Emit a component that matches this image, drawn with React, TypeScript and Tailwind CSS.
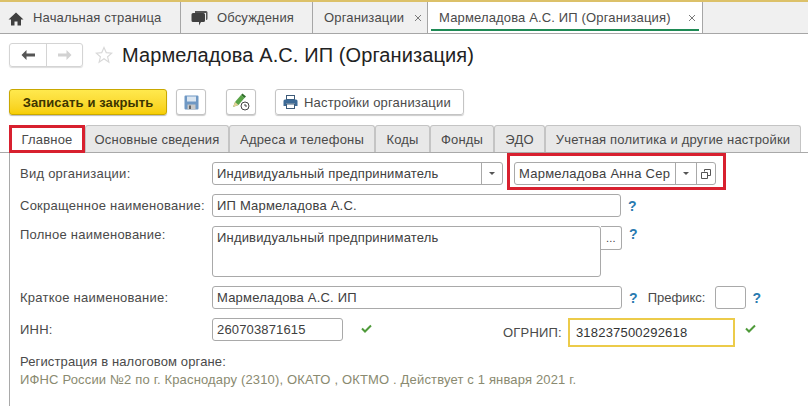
const font = "font-['Liberation_Sans',Arial,sans-serif]";

function CloseMark() {
  return (
    <svg width="8" height="8" viewBox="0 0 8 8" className="shrink-0">
      <path d="M1 1l6 6M7 1L1 7" stroke="#7a7a7a" strokeWidth="1" />
    </svg>
  );
}

function Help({ className = '' }: { className?: string }) {
  return <span className={`font-bold text-[14px] leading-none text-[#2a7ab0] ${className}`}>?</span>;
}

function Check({ className = '' }: { className?: string }) {
  return (
    <svg width="11" height="9" viewBox="0 0 11 9" className={className}>
      <path d="M1 4.500l3 3 6-6" fill="none" stroke="#4f9a3a" strokeWidth="2" />
    </svg>
  );
}

function Caret() {
  return (
    <svg width="6" height="3" viewBox="0 0 6 3">
      <path d="M0 0h6L3 3z" fill="#555" />
    </svg>
  );
}

function Field({ value, className = '' }: { value?: string; className?: string }) {
  return (
    <div className={`h-[23px] border border-[#a9a9a9] rounded-[3px] bg-white pl-[4px] flex items-center text-[#404040] ${className}`}>
      {value}
    </div>
  );
}

function TopTabs() {
  return (
    <div className="h-[34px] bg-[#f0f0f0] border-t-2 border-t-[#dcc169] border-b border-b-[#a6a6a6] flex text-[#4a4a4a] tracking-[0.15px]">
      <div className="w-[181px] border-r border-[#a6a6a6] flex items-center pl-[8px]">
        <svg width="16" height="14" viewBox="0 0 16 14" className="mr-[9px] mt-[2px]">
          <path d="M8 0.500L0.500 7.500H3V13.500H6.500V9.500H9.500V13.500H13V7.500H15.500z" fill="#404040" />
        </svg>
        Начальная страница
      </div>
      <div className="w-[132px] border-r border-[#a6a6a6] flex items-center pl-[10px]">
        <svg width="17" height="16" viewBox="0 0 17 16" className="mr-[9px]">
          <path d="M4 1h11a1.500 1.500 0 0 1 1.500 1.500v6a1.500 1.500 0 0 1-1.500 1.500H15V3H4z" fill="#555" />
          <path d="M2 3h10.500A1.500 1.500 0 0 1 14 4.500v6a1.500 1.500 0 0 1-1.500 1.500H10l-2 3.500V12H2a1.500 1.500 0 0 1-1.500-1.500v-6A1.500 1.500 0 0 1 2 3z" fill="#404040" />
        </svg>
        Обсуждения
      </div>
      <div className="w-[115px] border-r border-[#a6a6a6] flex items-center pl-[11px]">
        Организации
        <span className="ml-[10px] flex"><CloseMark /></span>
      </div>
      <div className="w-[275px] border-r border-[#a6a6a6] bg-white flex items-center pl-[11px] relative">
        Мармеладова А.С. ИП (Организация)
        <span className="ml-[17px] flex"><CloseMark /></span>
        <div className="absolute left-[3px] right-[3px] bottom-[2px] h-[2px] bg-[#1f8a55]" />
      </div>
    </div>
  );
}

function Header() {
  return (
    <div className="flex items-center pl-[9px] pt-[9px] h-[33px]">
      <div className="flex h-[24px] w-[74px] border border-[#d4d4d4] rounded-[3px] shadow-[0_1px_1px_#ddd]">
        <div className="w-[37px] border-r border-[#d4d4d4] flex items-center justify-center">
          <svg width="15" height="10" viewBox="0 0 15 10">
            <path d="M5.500 0L0.500 5l5 5V6.500H14v-3H5.500z" fill="#555" />
          </svg>
        </div>
        <div className="flex-1 flex items-center justify-center">
          <svg width="15" height="10" viewBox="0 0 15 10">
            <path d="M9.500 0l5 5-5 5V6.500H1v-3h8.500z" fill="#d2d2d2" />
          </svg>
        </div>
      </div>
      <svg width="18" height="18" viewBox="0 0 24 24" className="ml-[12px] mr-[9px]">
        <path d="M12 2l3 6.800 7.400.7-5.600 4.900 1.700 7.300L12 17l-6.500 4.700 1.700-7.300L1.600 9.500 9 8.800z" fill="none" stroke="#d8d8d8" strokeWidth="1.500" />
      </svg>
      <div className="text-[20px] text-[#222] tracking-[0.1px]">Мармеладова А.С. ИП (Организация)</div>
    </div>
  );
}

function Toolbar() {
  const iconBtn = 'w-[30px] h-[26px] border border-[#c4c4c4] rounded-[3px] flex items-center justify-center shadow-[0_1px_1px_#ccc] bg-white';
  return (
    <div className="flex items-center pl-[9px] mt-[22px] h-[26px]">
      <div className="w-[158px] h-[26px] rounded-[3px] border border-[#c9a800] bg-gradient-to-b from-[#ffe94d] to-[#f7ce00] flex items-center justify-center text-[#3d3500] font-bold text-[13px] tracking-[0.1px] shadow-[0_1px_1px_#bbb]">
        Записать и закрыть
      </div>
      <div className={`${iconBtn} ml-[9px]`}>
        <svg width="15" height="15" viewBox="0 0 15 15">
          <path d="M0.500 1.500a1 1 0 0 1 1-1h12a1 1 0 0 1 1 1v12a1 1 0 0 1-1 1h-12a1 1 0 0 1-1-1z" fill="#6f98c4" />
          <rect x="3" y="1.500" width="9" height="5" fill="#dbe6f1" />
          <rect x="3.500" y="9.500" width="8" height="5" fill="#c8c8c8" />
          <rect x="5" y="10.500" width="2" height="3.500" fill="#666" />
        </svg>
      </div>
      <div className={`${iconBtn} ml-[20px]`}>
        <svg width="18" height="18" viewBox="0 0 18 18">
          <path d="M1 14l2-5 6-7 3.500 3-6 7z" fill="#59a447" />
          <path d="M9 2l1.500-1.500L14 3.500 12.500 5z" fill="#2f6e2a" />
          <path d="M1 14l2-5 3.500 3z" fill="#e6d19a" />
          <circle cx="13" cy="13" r="4" fill="#fff" stroke="#444" strokeWidth="1" />
          <path d="M13 11v2h2" fill="none" stroke="#444" strokeWidth="1" />
        </svg>
      </div>
      <div className="ml-[19px] w-[189px] h-[26px] border border-[#c4c4c4] rounded-[3px] shadow-[0_1px_1px_#ccc] flex items-center pl-[7px] text-[#4a4a4a] tracking-[0.18px]">
        <svg width="15" height="14" viewBox="0 0 15 14" className="mr-[6px]">
          <rect x="3.500" y="0.500" width="8" height="4" fill="#fff" stroke="#3d5a78" />
          <path d="M0.500 6a1.500 1.500 0 0 1 1.500-1.500h11A1.500 1.500 0 0 1 14.500 6v5H12V8.500H3V11H0.500z" fill="#3d6a96" />
          <rect x="3.500" y="9" width="8" height="4.500" fill="#fff" stroke="#3d5a78" />
        </svg>
        Настройки организации
      </div>
    </div>
  );
}

function FormTabs() {
  const tab = 'h-[27px] flex items-center justify-center bg-[#e8e8e8] border border-[#c4c4c4] border-b-0 rounded-t-[3px] text-[#4a4a4a] tracking-[0.18px]';
  return (
    <div className="flex mt-[10px] pl-[9px] h-[28px] border-b border-[#a9a9a9]">
      <div className="w-[76px] h-[28px] border-[3px] border-[#d8202f] bg-white flex items-center justify-center text-[#4a4a4a] tracking-[0.18px]">Главное</div>
      <div className={`${tab} w-[144px]`}>Основные сведения</div>
      <div className={`${tab} w-[146px]`}>Адреса и телефоны</div>
      <div className={`${tab} w-[55px]`}>Коды</div>
      <div className={`${tab} w-[64px]`}>Фонды</div>
      <div className={`${tab} w-[51px]`}>ЭДО</div>
      <div className={`${tab} w-[256px]`}>Учетная политика и другие настройки</div>
    </div>
  );
}

function Form() {
  const label = 'w-[192px] shrink-0 text-[#4a4a4a] tracking-[0.25px]';
  return (
    <div className="ml-[9px] border-l border-[#a9a9a9] pl-[10px] flex-1 text-[#404040] tracking-[0.2px]">
      <div className="flex items-center h-[23px] mt-[9px]">
        <div className={label}>Вид организации:</div>
        <div className="w-[291px] h-[23px] border border-[#a9a9a9] rounded-[3px] flex items-center">
          <div className="flex-1 pl-[4px] tracking-[0.18px]">Индивидуальный предприниматель</div>
          <div className="w-[21px] h-full border-l border-[#a9a9a9] flex items-center justify-center"><Caret /></div>
        </div>
        <div className="ml-[4px] self-start -mt-[9px] w-[219px] h-[37px] border-[3px] border-[#d8202f] pl-[4px] pt-[6px]">
          <div className="w-[202px] h-[23px] border border-[#a9a9a9] rounded-[3px] flex items-center">
            <div className="w-[160px] pl-[4px] whitespace-nowrap tracking-[0.25px]">Мармеладова Анна Сер</div>
            <div className="w-[21px] h-full border-l border-[#a9a9a9] flex items-center justify-center"><Caret /></div>
            <div className="flex-1 h-full border-l border-[#a9a9a9] flex items-center justify-center">
              <svg width="10" height="10" viewBox="0 0 10 10">
                <path d="M3.500 2.500V0.500h6v6H7M0.500 3.500h6v6h-6z" fill="none" stroke="#555" />
              </svg>
            </div>
          </div>
        </div>
      </div>

      <div className="flex items-center h-[23px] mt-[9px]">
        <div className={label}>Сокращенное наименование:</div>
        <Field value="ИП Мармеладова А.С." className="w-[409px] tracking-[0.2px]" />
        <Help className="ml-[7px]" />
      </div>

      <div className="flex items-start h-[51px] mt-[9px]">
        <div className={`${label} mt-[1px]`}>Полное наименование:</div>
        <div className="w-[389px] h-[51px] border border-[#a9a9a9] rounded-[3px] pl-[4px] pt-[3px] tracking-[0.18px]">Индивидуальный предприниматель</div>
        <div className="w-[21px] h-[24px] border border-l-0 border-[#a9a9a9] rounded-r-[3px] flex items-end justify-center pb-[5px] text-[11px] leading-none">...</div>
        <Help className="ml-[7px] mt-[1px]" />
      </div>

      <div className="flex items-center h-[23px] mt-[9px]">
        <div className={label}>Краткое наименование:</div>
        <Field value="Мармеладова А.С. ИП" className="w-[410px] tracking-[0.2px]" />
        <Help className="ml-[7px]" />
        <div className="ml-[10px] text-[#4a4a4a] tracking-[0px]">Префикс:</div>
        <Field className="ml-[10px] w-[31px]" />
        <Help className="ml-[6px]" />
      </div>

      <div className="flex items-start h-[30px] mt-[9px]">
        <div className={`${label} mt-[4px]`}>ИНН:</div>
        <Field value="260703871615" className="w-[131px] tracking-[0.15px]" />
        <Check className="ml-[18px] mt-[6px]" />
        <div className="ml-[131px] mt-[7px] text-[#4a4a4a]">ОГРНИП:</div>
        <div className="ml-[6px] w-[167px] h-[29px] border-2 border-[#eccb4a] pl-[6px] flex items-center text-[#333] tracking-[0.2px]">318237500292618</div>
        <Check className="ml-[10px] mt-[6px]" />
      </div>

      <div className="mt-[5px] leading-[18px] text-[#4a4a4a] text-[13px] tracking-[0.13px]">Регистрация в налоговом органе:</div>
      <div className="leading-[18px] text-[#8a8a70] text-[13px] tracking-[0.16px]">ИФНС России №2 по г. Краснодару (2310), ОКАТО , ОКТМО . Действует с 1 января 2021 г.</div>
    </div>
  );
}

export default function App() {
  return (
    <div className={`w-[808px] h-[406px] bg-white overflow-hidden flex flex-col text-[13px] leading-[15px] ${font}`}>
      <TopTabs />
      <Header />
      <Toolbar />
      <FormTabs />
      <Form />
    </div>
  );
}
